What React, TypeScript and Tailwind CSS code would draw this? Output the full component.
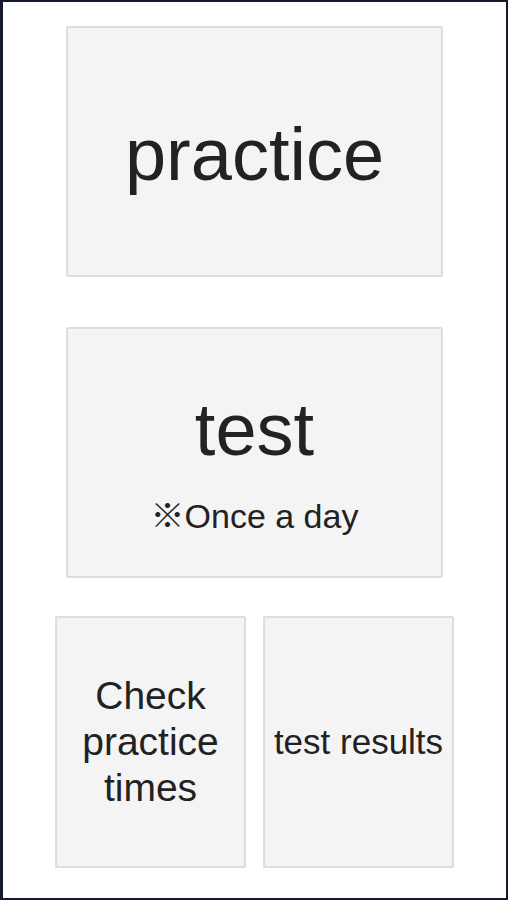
export default function App() {
  return (
    <div
      className="w-[508px] h-[900px] bg-white border-2 border-l-[3px] border-[#151a2c] flex flex-col items-center pt-[24px]"
      style={{ fontFamily: "'Liberation Sans', Arial, 'Noto Sans CJK JP', sans-serif" }}
    >
      <button className="w-[377px] h-[251px] bg-[#f4f4f4] border-2 border-[#dedede] rounded-[2px] flex items-center justify-center text-[74px] text-[#222] leading-none pt-[6px]">
        practice
      </button>
      <button className="mt-[50px] w-[377px] h-[251px] bg-[#f4f4f4] border-2 border-[#dedede] rounded-[2px] flex flex-col items-center justify-center text-[#222] pt-[20px]">
        <span className="text-[74px] leading-none">test</span>
        <span className="mt-[30px] text-[34px] leading-none">
          <span style={{ fontFamily: "'Noto Sans CJK JP', sans-serif" }}>※</span>Once a day
        </span>
      </button>
      <div className="mt-[38px] flex gap-[17px] w-[399px]">
        <button className="w-[191px] h-[252px] bg-[#f4f4f4] border-2 border-[#dedede] rounded-[2px] flex items-center justify-center text-[39px] leading-[46px] text-[#222]">
          Check
          <br />
          practice
          <br />
          times
        </button>
        <button className="w-[191px] h-[252px] bg-[#f4f4f4] border-2 border-[#dedede] rounded-[2px] flex items-center justify-center text-[35px] text-[#222] whitespace-nowrap">
          test results
        </button>
      </div>
    </div>
  );
}
